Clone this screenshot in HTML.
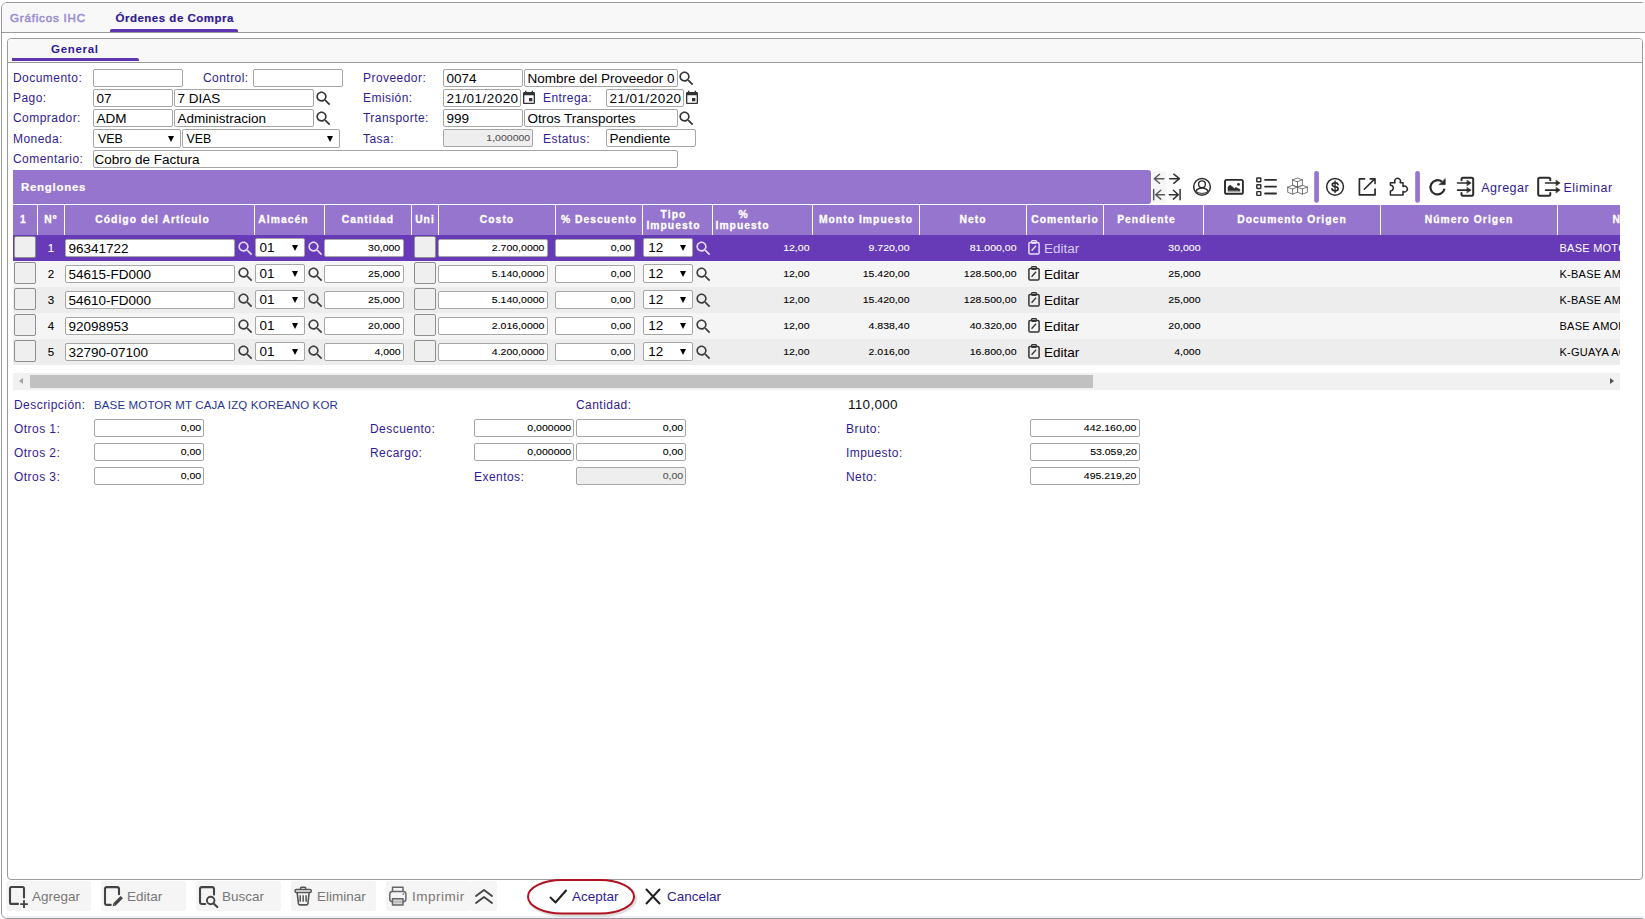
<!DOCTYPE html>
<html><head><meta charset="utf-8"><title>Ordenes de Compra</title>
<style>
*{box-sizing:border-box;margin:0;padding:0}
html,body{width:1645px;height:919px;overflow:hidden;background:#fff}
body{font-family:"Liberation Sans",sans-serif;position:relative;color:#000}
.a{position:absolute}
.lbl{position:absolute;font-size:12px;letter-spacing:.45px;color:#311b92;white-space:nowrap;line-height:14px;height:14px}
.in{position:absolute;height:18px;border:1px solid #a6a6a6;border-radius:2px;background:#fff;font-size:13.5px;line-height:17px;padding:0 0 0 2.5px;white-space:nowrap;overflow:hidden;color:#000}
.in.r{text-align:right;padding:0 2.100px 0 0;font-size:9.9px;letter-spacing:0;line-height:16.800px}
.in.r span{display:inline-block;transform:scaleX(1.065);transform-origin:right center;-webkit-text-stroke:.1px currentColor}
.in.g{background:#eee;color:#555}
.sel{position:absolute;height:19px;border:1px solid #a6a6a6;border-radius:2px;background:#fff;font-size:13.5px;line-height:17px;padding-left:4px;white-space:nowrap;overflow:hidden}
.sel i{position:absolute;right:6px;top:5.500px;width:0;height:0;border-left:3.5px solid transparent;border-right:3.5px solid transparent;border-top:6px solid #000}
.ic{position:absolute;display:block}
.th{position:absolute;top:205px;height:30px;background:#9575cd;color:#fff;font-weight:bold;font-size:10.3px;letter-spacing:1.05px;-webkit-text-stroke:.3px #fff;text-align:center;white-space:nowrap;overflow:hidden;display:flex;align-items:center;justify-content:center;line-height:11px;padding-bottom:1.5px}
.row{position:absolute;left:13px;width:1607px;height:26px;font-size:11px}
.btn{position:absolute;width:21.5px;height:21.500px;border:1px solid #8f8f8f;border-radius:2px;background:#efefef}
.num{position:absolute;font-size:9.9px;letter-spacing:0;line-height:26px;height:26px;text-align:right;white-space:nowrap;transform:scaleX(1.065);transform-origin:right center;-webkit-text-stroke:.1px currentColor}
.tb{position:absolute;top:881px;height:30px;background:#f5f5f5;border-radius:3px}
.tbt{position:absolute;font-size:13.5px;line-height:16px;white-space:nowrap;color:#777}
</style></head>
<body>
<svg width="0" height="0" style="position:absolute">
<defs>
<symbol id="mag" viewBox="0 0 24 24"><path d="M15.5 14h-.79l-.28-.27C15.41 12.59 16 11.11 16 9.5 16 5.91 13.09 3 9.5 3S3 5.910 3 9.5 5.910 16 9.5 16c1.610 0 3.090-.59 4.230-1.570l.27.28v.79l5 4.990L20.490 19l-4.990-5zm-6 0C7.010 14 5 11.990 5 9.500S7.010 5 9.500 5 14 7.010 14 9.500 11.990 14 9.500 14z"/></symbol>
<symbol id="cal" viewBox="0 0 24 24"><path d="M17 12h-5v5h5v-5zM16 1v2H8V1H6v2H5c-1.110 0-1.990.9-1.990 2L3 19c0 1.100.890 2 2 2h14c1.100 0 2-.9 2-2V5c0-1.100-.9-2-2-2h-1V1h-2zm3 18H5V8h14v11z"/></symbol>
<symbol id="clip" viewBox="0 0 12 15"><rect x="0.900" y="2.400" width="10.200" height="11.700" rx="1.300" fill="none" stroke="currentColor" stroke-width="1.500"/><rect x="3.600" y="0.700" width="4.800" height="2.600" rx="0.800" fill="none" stroke="currentColor" stroke-width="1.200"/><path d="M3.600 10.800 L8 5.800" stroke="currentColor" stroke-width="1.300" fill="none"/></symbol>
</defs></svg>
<div class="a" style="left:1px;top:2px;width:1645.500px;height:917px;border:1px solid #9a9a9a;border-radius:6px;background:#fff"></div>
<div class="a" style="left:2px;top:3px;width:1643px;height:29px;background:#f8f8f8;border-top-left-radius:5px"></div>
<div class="a" style="left:2px;top:32px;width:1643px;height:1px;background:#9a9a9a"></div>
<div class="a" style="left:5px;top:915.500px;width:1640px;height:2.500px;background:#eef2f7"></div>
<div class="a" style="left:10px;top:11px;font-size:11.6px;letter-spacing:.8px;-webkit-text-stroke:.55px #9c90d0;color:#9c90d0;line-height:14px;white-space:nowrap">Gráficos IHC</div>
<div class="a" style="left:115.500px;top:11px;font-size:11.5px;font-weight:bold;letter-spacing:.5px;-webkit-text-stroke:.2px #311b92;color:#311b92;line-height:14px;white-space:nowrap">Órdenes de Compra</div>
<div class="a" style="left:110px;top:29px;width:128px;height:3px;background:#5e35b1;border-radius:2px 2px 0 0"></div>
<div class="a" style="left:7px;top:38px;width:1636px;height:842px;border:1px solid #9a9a9a;border-radius:4px;background:#fff"></div>
<div class="a" style="left:8px;top:39px;width:1634px;height:23px;background:#f8f8f8;border-radius:3px 3px 0 0"></div>
<div class="a" style="left:8px;top:62px;width:1634px;height:1px;background:#9a9a9a"></div>
<div class="a" style="left:12px;top:58px;width:127px;height:3px;background:#5e35b1;border-radius:0 2px 0 0"></div>
<div class="a" style="left:51px;top:42px;font-size:11.5px;font-weight:bold;letter-spacing:.7px;color:#311b92;line-height:14px">General</div>
<div class="lbl" style="left:13px;top:71px">Documento:</div>
<div class="in " style="left:93px;top:69px;width:90px;height:18px"></div>
<div class="lbl" style="left:203px;top:71px">Control:</div>
<div class="in " style="left:253px;top:69px;width:90px;height:18px"></div>
<div class="lbl" style="left:363px;top:71px">Proveedor:</div>
<div class="in " style="left:443px;top:69px;width:79.5px;height:18px">0074</div>
<div class="in " style="left:524px;top:69px;width:154px;height:18px">Nombre del Proveedor 0</div>
<svg class="ic" style="left:677.3px;top:69.4px;color:#333;fill:#333" width="19" height="19"><use href="#mag"/></svg>
<div class="lbl" style="left:13px;top:91px">Pago:</div>
<div class="in " style="left:93px;top:89px;width:79.5px;height:18px">07</div>
<div class="in " style="left:174px;top:89px;width:139.5px;height:18px">7 DIAS</div>
<svg class="ic" style="left:313.6px;top:89.4px;color:#333;fill:#333" width="19" height="19"><use href="#mag"/></svg>
<div class="lbl" style="left:363px;top:91px">Emisión:</div>
<div class="in " style="left:443px;top:89px;width:78px;height:18px"><span style="letter-spacing:.45px">21/01/2020</span></div>
<svg class="ic" style="left:521.3px;top:89.7px;color:#333;fill:#333" width="16" height="16"><use href="#cal"/></svg>
<div class="lbl" style="left:543px;top:91px">Entrega:</div>
<div class="in " style="left:606px;top:89px;width:78px;height:18px"><span style="letter-spacing:.45px">21/01/2020</span></div>
<svg class="ic" style="left:684.3px;top:89.7px;color:#333;fill:#333" width="16" height="16"><use href="#cal"/></svg>
<div class="lbl" style="left:13px;top:111px">Comprador:</div>
<div class="in " style="left:93px;top:109px;width:79.5px;height:18px">ADM</div>
<div class="in " style="left:174px;top:109px;width:139.5px;height:18px">Administracion</div>
<svg class="ic" style="left:313.6px;top:109.4px;color:#333;fill:#333" width="19" height="19"><use href="#mag"/></svg>
<div class="lbl" style="left:363px;top:111px">Transporte:</div>
<div class="in " style="left:443px;top:109px;width:79.5px;height:18px">999</div>
<div class="in " style="left:524px;top:109px;width:154px;height:18px">Otros Transportes</div>
<svg class="ic" style="left:677.3px;top:109.4px;color:#333;fill:#333" width="19" height="19"><use href="#mag"/></svg>
<div class="lbl" style="left:13px;top:132px">Moneda:</div>
<div class="sel" style="left:93px;top:129px;width:87.5px;height:19px"><span style="font-size:12.4px">VEB</span><i></i></div>
<div class="sel" style="left:181.6px;top:129px;width:158.9px;height:19px"><span style="font-size:12.4px">VEB</span><i></i></div>
<div class="lbl" style="left:363px;top:132px">Tasa:</div>
<div class="in r g" style="left:443px;top:128.8px;width:90px;height:18px"><span>1,000000</span></div>
<div class="lbl" style="left:543px;top:132px">Estatus:</div>
<div class="in " style="left:606px;top:128.8px;width:90px;height:18px">Pendiente</div>
<div class="lbl" style="left:13px;top:152px">Comentario:</div>
<div class="in" style="left:93px;top:150px;width:585px;height:18px;padding-left:.5px">Cobro de Factura</div>
<div class="a" style="left:13px;top:170px;width:1138px;height:34px;background:#9575cd;border-radius:0 3px 3px 0"></div>
<div class="a" style="left:21px;top:180px;font-size:11.5px;font-weight:bold;letter-spacing:.7px;-webkit-text-stroke:.2px #fff;color:#fff;line-height:14px">Renglones</div>
<svg class="ic" style="left:1150px;top:168px" width="480" height="38" viewBox="1150 168 480 38" fill="none" stroke="#2b2b2b" stroke-width="1.700" stroke-linecap="round" stroke-linejoin="round">
<rect x="1152.100" y="171.200" width="14.600" height="15.600" rx="2" fill="#f5f5f5" stroke="none"/><rect x="1152.100" y="187.200" width="14.600" height="15.600" rx="2" fill="#f5f5f5" stroke="none"/>
<g stroke="#5a5a5a" stroke-width="1.500"><path d="M1163.800 178.700H1154.300M1159.500 174.200L1154.200 178.700L1159.500 183.300"/><path d="M1153.700 189.600V199.800M1164.400 194.700H1155.800M1160.800 190.300L1155.600 194.700L1160.800 199.100"/></g>
<g stroke="#333" stroke-width="1.500"><path d="M1169.700 178.700H1179.300M1173.800 174.200L1179.400 178.700L1173.800 183.300"/><path d="M1180.100 189.600V199.800M1169.300 194.700H1178M1173.400 190.300L1178.300 194.700L1173.400 199.100"/></g>
<circle cx="1202" cy="186.850" r="8.350" stroke-width="1.500"/><circle cx="1202" cy="184.300" r="3.400" stroke-width="1.400"/><path d="M1195.700 191.300Q1197.700 188 1202 188T1208.300 191.300" stroke-width="1.400"/><path d="M1196.300 191.800Q1202 195.300 1207.700 191.800" stroke-width="1"/>
<rect x="1225" y="179.900" width="17.900" height="13.900" rx="1.600" stroke-width="1.900"/><path d="M1228 190.800V187.200L1230 185L1234.300 188.400L1236 187.400L1240 189.600V190.800Z" fill="#2b2b2b" stroke-width=".6"/><circle cx="1238.500" cy="184.400" r="1.400" fill="#2b2b2b" stroke="none"/>
<rect x="1256.800" y="178" width="4" height="3.800" rx=".4" stroke-width="1.400"/><path d="M1265.100 179.9H1276" stroke-width="1.900"/>
<rect x="1256.800" y="184.7" width="4" height="3.800" rx=".4" stroke-width="1.400"/><path d="M1265.100 186.6H1276" stroke-width="1.900"/>
<rect x="1256.800" y="191.6" width="4" height="3.800" rx=".4" stroke-width="1.400"/><path d="M1265.100 193.5H1276" stroke-width="1.900"/>
<path d="M1292.6 179.8L1297.5 178L1302.4 179.8L1297.5 181.6ZM1292.6 179.8V185.3L1297.5 187.1L1302.4 185.3V179.8M1297.5 181.6V187.1M1287.7 187.1L1292.6 185.3L1297.5 187.1L1292.6 188.9ZM1287.7 187.1V192.3L1292.6 194.1L1297.5 192.3V187.1M1292.6 188.9V194.1M1297.6 187.1L1302.5 185.3L1307.4 187.1L1302.5 188.9ZM1297.6 187.1V192.3L1302.5 194.1L1307.4 192.3V187.1M1302.5 188.9V194.1" stroke="#6a6a6a" stroke-width=".9" stroke-linejoin="round"/>
<rect x="1314.200" y="171" width="4.700" height="31.800" rx="2.300" fill="#9575cd" stroke="none"/>
<rect x="1415.200" y="171" width="4.700" height="31.800" rx="2.300" fill="#9575cd" stroke="none"/>
<circle cx="1335.050" cy="186.800" r="8.400" stroke-width="1.500"/><path d="M1338 184.600Q1337.600 182.800 1335.100 182.800Q1332.300 182.800 1332.300 184.700Q1332.300 186.200 1335.100 186.700Q1338.100 187.200 1338.100 188.900Q1338.100 190.800 1335.100 190.800Q1332.400 190.800 1331.900 188.800" stroke-width="1.700"/><path d="M1335.100 181V192.500" stroke-width="1.300"/>
<path d="M1364.500 178.900H1359.400V194.900H1375.050V189" stroke-width="1.700"/><path d="M1364.300 189.200L1374.700 178.900M1370.200 178.900H1375.050V183.600" stroke-width="1.600"/>
<path d="M1390.400 195V191A2.900 2.900 0 0 0 1390.400 185.200V182.700H1395.100A2.900 2.900 0 1 1 1400.100 182.700H1403V186.500A2.900 2.900 0 1 1 1403 191.500V195Z" stroke-width="1.500"/>
<path d="M1444.500 188.800A7.100 7.100 0 1 1 1441.900 181.700" stroke-width="2.200" stroke-linecap="butt"/><path d="M1445.300 178.700V184.700H1439.100Z" fill="#2b2b2b" stroke="#2b2b2b" stroke-width=".5"/>
<path d="M1461.500 180.300V179.200Q1461.500 177.700 1463 177.700H1471.700Q1473.200 177.700 1473.200 179.200V194.200Q1473.200 195.700 1471.700 195.700H1463Q1461.500 195.700 1461.500 194.200V193.100" stroke-width="2"/><path d="M1457.500 183H1468M1457.500 190.100H1468" stroke-width="1.600"/><path d="M1467.200 180.300L1471.200 183L1467.200 185.700ZM1467.200 187.400L1471.200 190.100L1467.200 192.800Z" fill="#2b2b2b" stroke-width=".5"/>
<path d="M1550.300 180.300V179.200Q1550.300 177.700 1548.800 177.700H1539.700Q1538.200 177.700 1538.200 179.200V194.200Q1538.200 195.700 1539.700 195.700H1548.800Q1550.300 195.700 1550.300 194.200V193.100" stroke-width="2"/><path d="M1545.500 183H1557M1545.500 190.100H1557" stroke-width="1.600"/><path d="M1556.200 180.300L1560.200 183L1556.200 185.700ZM1556.200 187.400L1560.200 190.100L1556.200 192.800Z" fill="#2b2b2b" stroke-width=".5"/>
</svg>
<div class="a" style="left:1481.200px;top:180.400px;font-size:12.5px;line-height:16px;color:#311b92;letter-spacing:.5px">Agregar</div>
<div class="a" style="left:1563.500px;top:180.400px;font-size:12.5px;line-height:16px;color:#311b92;letter-spacing:.5px">Eliminar</div>
<div class="th" style="left:13px;width:24px"><span style="margin-right:3px">1</span></div>
<div class="th" style="left:38px;width:26px">Nº</div>
<div class="th" style="left:65px;width:189px"><span style="margin-right:14px">Código del Artículo</span></div>
<div class="th" style="left:255px;width:69px"><span style="margin-right:12px">Almacén</span></div>
<div class="th" style="left:325px;width:86px">Cantidad</div>
<div class="th" style="left:412px;width:26px">Uni</div>
<div class="th" style="left:439px;width:116px">Costo</div>
<div class="th" style="left:556px;width:86px">% Descuento</div>
<div class="th" style="left:643px;width:69px"><span style="margin-right:8px;position:relative;top:1px">Tipo<br>Impuesto</span></div>
<div class="th" style="left:713px;width:99px"><span style="display:block;width:100px;text-align:left;padding-left:2.500px;position:relative;top:1px"><span style="display:inline-block;width:56px;text-align:center">%</span><br>Impuesto</span></div>
<div class="th" style="left:813px;width:106px">Monto Impuesto</div>
<div class="th" style="left:920px;width:106px">Neto</div>
<div class="th" style="left:1027px;width:76px">Comentario</div>
<div class="th" style="left:1104px;width:99px"><span style="margin-right:14px">Pendiente</span></div>
<div class="th" style="left:1204px;width:176px">Documento Origen</div>
<div class="th" style="left:1381px;width:176px">Número Origen</div>
<div class="th" style="left:1558px;width:62px"><span style="position:absolute;left:54.500px;top:9px">Nombre</span></div>
<div class="row" style="top:235px;background:#673ab7;color:#fff">
</div>
<div class="btn" style="left:14.300px;top:236.2px"></div>
<div class="num" style="left:38px;top:235px;width:26px;text-align:center;color:#fff;font-size:10.5px;transform:scaleX(1.1);transform-origin:center">1</div>
<div class="in" style="left:65px;top:239.3px;width:170px">96341722</div>
<svg class="ic" style="left:235.6px;top:238.9px;color:#e6ddf6;fill:#e6ddf6" width="19" height="19"><use href="#mag"/></svg>
<div class="sel" style="left:254.600px;top:238.2px;width:50px;height:18.800px;line-height:18.400px">01<i></i></div>
<svg class="ic" style="left:305.6px;top:238.9px;color:#e6ddf6;fill:#e6ddf6" width="19" height="19"><use href="#mag"/></svg>
<div class="in r" style="left:324px;top:239.3px;width:79.700px"><span>30,000</span></div>
<div class="btn" style="left:414.300px;top:236.2px"></div>
<div class="in r" style="left:438px;top:239.3px;width:109.700px"><span>2.700,0000</span></div>
<div class="in r" style="left:555.200px;top:239.3px;width:79.500px"><span>0,00</span></div>
<div class="sel" style="left:643.200px;top:238.2px;width:50px;height:18.800px;line-height:18.400px">12<i></i></div>
<svg class="ic" style="left:693.8px;top:238.9px;color:#e6ddf6;fill:#e6ddf6" width="19" height="19"><use href="#mag"/></svg>
<div class="num" style="left:712px;top:235px;width:97.500px;color:#fff">12,00</div>
<div class="num" style="left:813px;top:235px;width:96.500px;color:#fff">9.720,00</div>
<div class="num" style="left:920px;top:235px;width:96.500px;color:#fff">81.000,00</div>
<svg class="ic" style="left:1028px;top:239.8px;color:#e6def5;fill:#e6def5" width="12" height="15"><use href="#clip"/></svg>
<div class="a" style="left:1044px;top:240.5px;font-size:13.5px;line-height:16px;color:#d6caee">Editar</div>
<div class="num" style="left:1104px;top:235px;width:96.500px;color:#fff">30,000</div>
<div class="a" style="left:1559.500px;top:235px;width:60.500px;overflow:hidden;white-space:nowrap;font-size:11px;letter-spacing:.25px;line-height:26px;color:#fff">BASE MOTOR MT CAJA</div>
<div class="row" style="top:261px;background:#f5f5f5;color:#000">
</div>
<div class="btn" style="left:14.300px;top:262.2px"></div>
<div class="num" style="left:38px;top:261px;width:26px;text-align:center;color:#000;font-size:10.5px;transform:scaleX(1.1);transform-origin:center">2</div>
<div class="in" style="left:65px;top:265.3px;width:170px">54615-FD000</div>
<svg class="ic" style="left:235.6px;top:264.9px;color:#3c3c3c;fill:#3c3c3c" width="19" height="19"><use href="#mag"/></svg>
<div class="sel" style="left:254.600px;top:264.2px;width:50px;height:18.800px;line-height:18.400px">01<i></i></div>
<svg class="ic" style="left:305.6px;top:264.9px;color:#3c3c3c;fill:#3c3c3c" width="19" height="19"><use href="#mag"/></svg>
<div class="in r" style="left:324px;top:265.3px;width:79.700px"><span>25,000</span></div>
<div class="btn" style="left:414.300px;top:262.2px"></div>
<div class="in r" style="left:438px;top:265.3px;width:109.700px"><span>5.140,0000</span></div>
<div class="in r" style="left:555.200px;top:265.3px;width:79.500px"><span>0,00</span></div>
<div class="sel" style="left:643.200px;top:264.2px;width:50px;height:18.800px;line-height:18.400px">12<i></i></div>
<svg class="ic" style="left:693.8px;top:264.9px;color:#3c3c3c;fill:#3c3c3c" width="19" height="19"><use href="#mag"/></svg>
<div class="num" style="left:712px;top:261px;width:97.500px;color:#000">12,00</div>
<div class="num" style="left:813px;top:261px;width:96.500px;color:#000">15.420,00</div>
<div class="num" style="left:920px;top:261px;width:96.500px;color:#000">128.500,00</div>
<svg class="ic" style="left:1028px;top:265.8px;color:#333;fill:#333" width="12" height="15"><use href="#clip"/></svg>
<div class="a" style="left:1044px;top:266.5px;font-size:13.5px;line-height:16px;color:#000">Editar</div>
<div class="num" style="left:1104px;top:261px;width:96.500px;color:#000">25,000</div>
<div class="a" style="left:1559.500px;top:261px;width:60.500px;overflow:hidden;white-space:nowrap;font-size:11px;letter-spacing:.25px;line-height:26px;color:#000">K-BASE AMORTIGUADOR</div>
<div class="row" style="top:287px;background:#ededed;color:#000">
</div>
<div class="btn" style="left:14.300px;top:288.2px"></div>
<div class="num" style="left:38px;top:287px;width:26px;text-align:center;color:#000;font-size:10.5px;transform:scaleX(1.1);transform-origin:center">3</div>
<div class="in" style="left:65px;top:291.3px;width:170px">54610-FD000</div>
<svg class="ic" style="left:235.6px;top:290.9px;color:#3c3c3c;fill:#3c3c3c" width="19" height="19"><use href="#mag"/></svg>
<div class="sel" style="left:254.600px;top:290.2px;width:50px;height:18.800px;line-height:18.400px">01<i></i></div>
<svg class="ic" style="left:305.6px;top:290.9px;color:#3c3c3c;fill:#3c3c3c" width="19" height="19"><use href="#mag"/></svg>
<div class="in r" style="left:324px;top:291.3px;width:79.700px"><span>25,000</span></div>
<div class="btn" style="left:414.300px;top:288.2px"></div>
<div class="in r" style="left:438px;top:291.3px;width:109.700px"><span>5.140,0000</span></div>
<div class="in r" style="left:555.200px;top:291.3px;width:79.500px"><span>0,00</span></div>
<div class="sel" style="left:643.200px;top:290.2px;width:50px;height:18.800px;line-height:18.400px">12<i></i></div>
<svg class="ic" style="left:693.8px;top:290.9px;color:#3c3c3c;fill:#3c3c3c" width="19" height="19"><use href="#mag"/></svg>
<div class="num" style="left:712px;top:287px;width:97.500px;color:#000">12,00</div>
<div class="num" style="left:813px;top:287px;width:96.500px;color:#000">15.420,00</div>
<div class="num" style="left:920px;top:287px;width:96.500px;color:#000">128.500,00</div>
<svg class="ic" style="left:1028px;top:291.8px;color:#333;fill:#333" width="12" height="15"><use href="#clip"/></svg>
<div class="a" style="left:1044px;top:292.5px;font-size:13.5px;line-height:16px;color:#000">Editar</div>
<div class="num" style="left:1104px;top:287px;width:96.500px;color:#000">25,000</div>
<div class="a" style="left:1559.500px;top:287px;width:60.500px;overflow:hidden;white-space:nowrap;font-size:11px;letter-spacing:.25px;line-height:26px;color:#000">K-BASE AMORTIGUADOR</div>
<div class="row" style="top:313px;background:#f5f5f5;color:#000">
</div>
<div class="btn" style="left:14.300px;top:314.2px"></div>
<div class="num" style="left:38px;top:313px;width:26px;text-align:center;color:#000;font-size:10.5px;transform:scaleX(1.1);transform-origin:center">4</div>
<div class="in" style="left:65px;top:317.3px;width:170px">92098953</div>
<svg class="ic" style="left:235.6px;top:316.9px;color:#3c3c3c;fill:#3c3c3c" width="19" height="19"><use href="#mag"/></svg>
<div class="sel" style="left:254.600px;top:316.2px;width:50px;height:18.800px;line-height:18.400px">01<i></i></div>
<svg class="ic" style="left:305.6px;top:316.9px;color:#3c3c3c;fill:#3c3c3c" width="19" height="19"><use href="#mag"/></svg>
<div class="in r" style="left:324px;top:317.3px;width:79.700px"><span>20,000</span></div>
<div class="btn" style="left:414.300px;top:314.2px"></div>
<div class="in r" style="left:438px;top:317.3px;width:109.700px"><span>2.016,0000</span></div>
<div class="in r" style="left:555.200px;top:317.3px;width:79.500px"><span>0,00</span></div>
<div class="sel" style="left:643.200px;top:316.2px;width:50px;height:18.800px;line-height:18.400px">12<i></i></div>
<svg class="ic" style="left:693.8px;top:316.9px;color:#3c3c3c;fill:#3c3c3c" width="19" height="19"><use href="#mag"/></svg>
<div class="num" style="left:712px;top:313px;width:97.500px;color:#000">12,00</div>
<div class="num" style="left:813px;top:313px;width:96.500px;color:#000">4.838,40</div>
<div class="num" style="left:920px;top:313px;width:96.500px;color:#000">40.320,00</div>
<svg class="ic" style="left:1028px;top:317.8px;color:#333;fill:#333" width="12" height="15"><use href="#clip"/></svg>
<div class="a" style="left:1044px;top:318.5px;font-size:13.5px;line-height:16px;color:#000">Editar</div>
<div class="num" style="left:1104px;top:313px;width:96.500px;color:#000">20,000</div>
<div class="a" style="left:1559.500px;top:313px;width:60.500px;overflow:hidden;white-space:nowrap;font-size:11px;letter-spacing:.25px;line-height:26px;color:#000">BASE AMORTIGUADOR</div>
<div class="row" style="top:339px;background:#ededed;color:#000">
</div>
<div class="btn" style="left:14.300px;top:340.2px"></div>
<div class="num" style="left:38px;top:339px;width:26px;text-align:center;color:#000;font-size:10.5px;transform:scaleX(1.1);transform-origin:center">5</div>
<div class="in" style="left:65px;top:343.3px;width:170px">32790-07100</div>
<svg class="ic" style="left:235.6px;top:342.9px;color:#3c3c3c;fill:#3c3c3c" width="19" height="19"><use href="#mag"/></svg>
<div class="sel" style="left:254.600px;top:342.2px;width:50px;height:18.800px;line-height:18.400px">01<i></i></div>
<svg class="ic" style="left:305.6px;top:342.9px;color:#3c3c3c;fill:#3c3c3c" width="19" height="19"><use href="#mag"/></svg>
<div class="in r" style="left:324px;top:343.3px;width:79.700px"><span>4,000</span></div>
<div class="btn" style="left:414.300px;top:340.2px"></div>
<div class="in r" style="left:438px;top:343.3px;width:109.700px"><span>4.200,0000</span></div>
<div class="in r" style="left:555.200px;top:343.3px;width:79.500px"><span>0,00</span></div>
<div class="sel" style="left:643.200px;top:342.2px;width:50px;height:18.800px;line-height:18.400px">12<i></i></div>
<svg class="ic" style="left:693.8px;top:342.9px;color:#3c3c3c;fill:#3c3c3c" width="19" height="19"><use href="#mag"/></svg>
<div class="num" style="left:712px;top:339px;width:97.500px;color:#000">12,00</div>
<div class="num" style="left:813px;top:339px;width:96.500px;color:#000">2.016,00</div>
<div class="num" style="left:920px;top:339px;width:96.500px;color:#000">16.800,00</div>
<svg class="ic" style="left:1028px;top:343.8px;color:#333;fill:#333" width="12" height="15"><use href="#clip"/></svg>
<div class="a" style="left:1044px;top:344.5px;font-size:13.5px;line-height:16px;color:#000">Editar</div>
<div class="num" style="left:1104px;top:339px;width:96.500px;color:#000">4,000</div>
<div class="a" style="left:1559.500px;top:339px;width:60.500px;overflow:hidden;white-space:nowrap;font-size:11px;letter-spacing:.25px;line-height:26px;color:#000">K-GUAYA ACELERADOR</div>
<div class="a" style="left:13px;top:373px;width:1607px;height:17px;background:#f1f1f1"></div>
<div class="a" style="left:30px;top:375px;width:1063px;height:13px;background:#c1c1c1"></div>
<div class="a" style="left:18.700px;top:377.900px;width:0;height:0;border-top:3.600px solid transparent;border-bottom:3.600px solid transparent;border-right:4.600px solid #a3a3a3"></div>
<div class="a" style="left:1609.700px;top:377.900px;width:0;height:0;border-top:3.600px solid transparent;border-bottom:3.600px solid transparent;border-left:4.600px solid #505050"></div>
<div class="lbl" style="left:14px;top:397.5px;">Descripción:</div>
<div class="lbl" style="left:94px;top:397.5px;color:#283593;letter-spacing:.14px;font-size:11.5px">BASE MOTOR MT CAJA IZQ KOREANO KOR</div>
<div class="lbl" style="left:576px;top:397.5px;">Cantidad:</div>
<div class="a" style="left:848px;top:397px;font-size:13.5px;line-height:16px;letter-spacing:.3px;color:#111">110,000</div>
<div class="lbl" style="left:14px;top:421.5px;">Otros 1:</div>
<div class="in r" style="left:94px;top:419px;width:110px;height:18px"><span>0,00</span></div>
<div class="lbl" style="left:14px;top:445.5px;">Otros 2:</div>
<div class="in r" style="left:94px;top:443px;width:110px;height:18px"><span>0,00</span></div>
<div class="lbl" style="left:14px;top:469.5px;">Otros 3:</div>
<div class="in r" style="left:94px;top:467px;width:110px;height:18px"><span>0,00</span></div>
<div class="lbl" style="left:370px;top:421.5px;">Descuento:</div>
<div class="in r" style="left:474px;top:419px;width:100px;height:18px"><span>0,000000</span></div>
<div class="in r" style="left:576px;top:419px;width:110px;height:18px"><span>0,00</span></div>
<div class="lbl" style="left:370px;top:445.5px;">Recargo:</div>
<div class="in r" style="left:474px;top:443px;width:100px;height:18px"><span>0,000000</span></div>
<div class="in r" style="left:576px;top:443px;width:110px;height:18px"><span>0,00</span></div>
<div class="lbl" style="left:474px;top:469.5px;">Exentos:</div>
<div class="in r g" style="left:576px;top:467px;width:110px;height:18px"><span>0,00</span></div>
<div class="lbl" style="left:846px;top:421.5px;">Bruto:</div>
<div class="in r" style="left:1030px;top:419px;width:110px;height:18px"><span>442.160,00</span></div>
<div class="lbl" style="left:846px;top:445.5px;">Impuesto:</div>
<div class="in r" style="left:1030px;top:443px;width:110px;height:18px"><span>53.059,20</span></div>
<div class="lbl" style="left:846px;top:469.5px;">Neto:</div>
<div class="in r" style="left:1030px;top:467px;width:110px;height:18px"><span>495.219,20</span></div>
<div class="tb" style="left:6px;width:85px"></div>
<div class="tbt" style="left:32px;top:889px">Agregar</div>
<div class="tb" style="left:101px;width:85px"></div>
<div class="tbt" style="left:127px;top:889px">Editar</div>
<div class="tb" style="left:196px;width:85px"></div>
<div class="tbt" style="left:222px;top:889px">Buscar</div>
<div class="tb" style="left:291px;width:85px"></div>
<div class="tbt" style="left:317px;top:889px">Eliminar</div>
<div class="tb" style="left:386px;width:84px"></div>
<div class="tbt" style="left:412px;top:889px"><span style="letter-spacing:.5px">Imprimir</span></div>
<div class="tb" style="left:470px;width:27px"></div>
<svg class="ic" style="left:0;top:878px" width="760" height="41" viewBox="0 878 760 41" fill="none" stroke="#444" stroke-width="1.800" stroke-linecap="round" stroke-linejoin="round">
<path d="M18 903.900H11.500C10.500 903.900 10 903.400 10 902.400V888.500C10 887.500 10.500 887 11.500 887H22.500C23.500 887 24 887.500 24 888.500V897.500" stroke-width="2.100"/><path d="M24 900.300V908M20.200 904.100H27.900" stroke-width="1.900" stroke-linecap="butt"/>
<path d="M110.700 904.900H107Q105 904.900 105 902.900V889.100Q105 887.100 107 887.100H117Q119 887.100 119 889.100V894.200" stroke-width="2.100"/><path d="M114.400 904.500L121.800 897.100" stroke-width="3.200" stroke-linecap="butt"/><path d="M112.600 906.300L113.300 903.400L115.500 905.600Z" fill="#444" stroke="none"/>
<path d="M205.200 904H202Q200 904 200 902V889.100Q200 887.100 202 887.100H212Q214 887.100 214 889.100V894.600" stroke-width="2.100"/><circle cx="210.700" cy="900.500" r="3.750" stroke-width="1.900"/><path d="M213.600 903.400L217.300 907.100" stroke-width="2.100"/>
<g stroke="#555" stroke-width="1.500"><rect x="295" y="889.600" width="16.300" height="3" rx="1.500"/><path d="M300.600 889.300V888Q300.600 887.200 301.400 887.200H304.900Q305.700 887.200 305.700 888V889.300"/><path d="M297.200 893L298.500 903.800Q298.600 904.900 299.700 904.900H306.700Q307.800 904.900 307.900 903.800L309.100 893" stroke-width="1.600"/><path d="M300.200 895.200V901.800M303.150 895.200V901.800M306.100 895.200V901.800" stroke-width="1.500" stroke-linecap="butt"/></g>
<g stroke="#666" stroke-width="1.500"><path d="M392.500 890.800V887.300H403V890.800"/><rect x="389.800" y="891.500" width="16.100" height="10" rx="2.600"/><rect x="392.500" y="898.800" width="10.500" height="6.200" fill="#d6d6d6"/><path d="M393.500 901.900H402" stroke-width=".8" stroke="#999"/><circle cx="403.200" cy="894" r=".5" fill="#666" stroke-width=".5"/></g>
<path d="M476 896L484 890L492 896M476 903L484 897L492 903" stroke="#444" stroke-width="1.900"/>
<rect x="529.500" y="881.800" width="106" height="33.500" rx="34" ry="16.750" stroke="#000" stroke-opacity=".13" stroke-width="3"/>
<rect x="528" y="880" width="106" height="33.500" rx="34" ry="16.750" stroke="#b01222" stroke-width="2" fill="#fff"/>
<path d="M550.500 897.500L555.500 902.500L566 890.500" stroke="#222" stroke-width="2"/>
<path d="M646.500 889.500L659.500 903.500M659.500 889.500L646.500 903.500" stroke="#222" stroke-width="2"/>
</svg>
<div class="a" style="left:572px;top:889px;font-size:13.5px;line-height:16px;color:#311b92">Aceptar</div>
<div class="a" style="left:667px;top:889px;font-size:13.5px;line-height:16px;color:#311b92">Cancelar</div>
</body></html>
